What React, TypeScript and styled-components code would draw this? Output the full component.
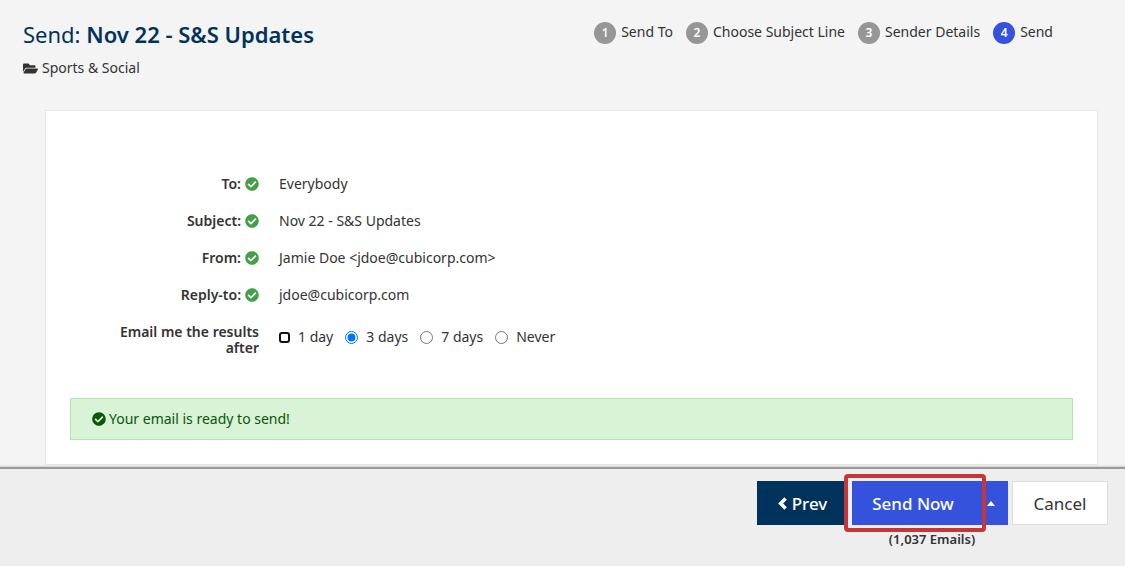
import React from "react";
import styled, { createGlobalStyle, css } from "styled-components";
import { FaCheckCircle, FaFolderOpen } from "react-icons/fa";

const GlobalStyle = createGlobalStyle`
  * { box-sizing: border-box; }
  body {
    margin: 0;
    background: #f4f4f4;
    color: #333;
    font: 14px/20px "Noto Sans", sans-serif;
  }
  button, input { font-family: inherit; }
`;

const Page = styled.div`
  display: flex;
  flex-direction: column;
  min-height: 100vh;
`;

const Header = styled.header`
  display: flex;
  justify-content: space-between;
  align-items: flex-start;
  padding: 18px 72px 0 23px;
`;

const Title = styled.h1`
  margin: 0;
  font-size: 22px;
  line-height: 32px;
  font-weight: 400;
  color: #00335b;
  strong { font-weight: 600; }
`;

const Folder = styled.p`
  display: flex;
  align-items: center;
  gap: 4px;
  margin: 8px 0 0;
`;

const Steps = styled.ol`
  display: flex;
  gap: 13px;
  margin: 4px 0 0;
  padding: 0;
  list-style: none;
`;

const Step = styled.li`
  display: flex;
  align-items: flex-start;
  gap: 5px;
  white-space: nowrap;
`;

const StepNumber = styled.span<{ $active: boolean }>`
  width: 22px;
  height: 22px;
  border-radius: 50%;
  background: ${(p) => (p.$active ? "#3452dc" : "#969696")};
  color: #fff;
  font-size: 12px;
  line-height: 22px;
  font-weight: 600;
  text-align: center;
`;

const Main = styled.main`
  flex: 1;
  padding: 32px 27px 0 45px;
`;

const Card = styled.section`
  padding: 63px 24px 24px;
  background: #fff;
  border: 1px solid #e8e8e8;
`;

const Summary = styled.div`
  display: grid;
  grid-template-columns: 189px 1fr;
  column-gap: 20px;
  row-gap: 17px;
`;

const Label = styled.div`
  display: flex;
  justify-content: flex-end;
  align-items: center;
  gap: 4px;
  font-weight: 600;
  text-align: right;
`;

const ResultsLabel = styled(Label)`
  padding: 2px 0 0 40px;
  line-height: 16px;
`;

const Radios = styled.div`
  display: flex;
  align-items: center;
  align-self: start;
  gap: 12px;
  height: 30px;
`;

const Choice = styled.label`
  display: flex;
  align-items: center;
  gap: 8px;
`;

const Radio = styled.input<{ $square: boolean }>`
  width: 13px;
  height: 13px;
  margin: 0;
  accent-color: #0075ff;
  ${(p) =>
    p.$square &&
    css`
      appearance: none;
      width: 11px;
      height: 11px;
      border: 2px solid #101010;
      border-radius: 3px;
      &:checked { background: #0075ff; }
    `}
`;

const Alert = styled.div`
  display: flex;
  align-items: center;
  gap: 3px;
  margin-top: 42px;
  padding: 10px 21px;
  border: 1px solid #b5e5b0;
  background: #d8f3d5;
  color: #0b560b;
`;

const Footer = styled.footer`
  position: sticky;
  bottom: 0;
  display: flex;
  justify-content: flex-end;
  align-items: flex-start;
  height: 99px;
  padding: 12px 17px 0;
  border-top: 2px solid #999;
  background: #eee;
  box-shadow: 0 -1px 2px rgba(0, 0, 0, 0.15);
`;

const Button = styled.button<{ $kind: "dark" | "blue" | "plain" }>`
  display: flex;
  align-items: center;
  justify-content: center;
  gap: 5px;
  height: 44px;
  padding: 0 20px;
  border: 0;
  font-size: 17px;
  white-space: nowrap;
  ${(p) =>
    p.$kind === "dark"
      ? css`background: #00335b; color: #fff; width: 91px; font-weight: 500;`
      : p.$kind === "blue"
        ? css`background: #3452dc; color: #fff; font-weight: 500;`
        : css`background: #fff; color: #333; border: 1px solid #ddd; width: 96px; margin-left: 4px;`}
`;

const SendGroup = styled.div`
  display: flex;
  flex-direction: column;
  align-items: center;
`;

const SplitButton = styled.div`
  display: flex;
  margin-left: 4px;
`;

const Highlight = styled.div`
  position: relative;
  display: flex;
  width: 130px;
  &::after {
    content: "";
    position: absolute;
    inset: -7px -4px -7px -8px;
    border: 4px solid #c63639;
    border-radius: 4px;
    box-shadow: inset 4px 0 0 #eee;
    pointer-events: none;
  }
  button { flex: 1; padding: 0 28px 0 20px; }
`;

const CaretButton = styled(Button)`
  width: 26px;
  padding: 0 8px 0 0;
`;

const Count = styled.strong`
  margin: 4px 0 0 8px;
  font-size: 13px;
  font-weight: 600;
`;

const steps = ["Send To", "Choose Subject Line", "Sender Details", "Send"];

const details = [
  ["To:", "Everybody"],
  ["Subject:", "Nov 22 - S&S Updates"],
  ["From:", "Jamie Doe <jdoe@cubicorp.com>"],
  ["Reply-to:", "jdoe@cubicorp.com"],
];

export default function App() {
  return (
    <Page>
      <GlobalStyle />
      <Header>
        <div>
          <Title>Send: <strong>Nov 22 - S&amp;S Updates</strong></Title>
          <Folder><FaFolderOpen size={15} />Sports &amp; Social</Folder>
        </div>
        <Steps>
          {steps.map((name, i) => (
            <Step key={name}>
              <StepNumber $active={i === 3}>{i + 1}</StepNumber>
              {name}
            </Step>
          ))}
        </Steps>
      </Header>
      <Main>
        <Card>
          <Summary>
            {details.map(([label, value]) => (
              <React.Fragment key={label}>
                <Label>{label}<FaCheckCircle size={14} color="#43a047" /></Label>
                <div>{value}</div>
              </React.Fragment>
            ))}
            <ResultsLabel id="results-label">Email me the results after</ResultsLabel>
            <Radios role="radiogroup" aria-labelledby="results-label">
              {["1 day", "3 days", "7 days", "Never"].map((name, i) => (
                <Choice key={name}>
                  <Radio
                    type="radio"
                    name="results"
                    $square={i === 0}
                    defaultChecked={name === "3 days"}
                  />
                  {name}
                </Choice>
              ))}
            </Radios>
          </Summary>
          <Alert role="status"><FaCheckCircle size={14} />Your email is ready to send!</Alert>
        </Card>
      </Main>
      <Footer>
        <Button $kind="dark" type="button">
          <svg width="9" height="13" viewBox="0 0 9 13" aria-hidden="true">
            <path d="M7.6 1.5L2.6 6.5l5 5" fill="none" stroke="currentColor" strokeWidth="3.4" />
          </svg>
          Prev
        </Button>
        <SendGroup>
          <SplitButton>
            <Highlight><Button $kind="blue" type="button">Send Now</Button></Highlight>
            <CaretButton $kind="blue" type="button" aria-label="More send options">
              <svg width="8" height="5" viewBox="0 0 8 5"><path d="M4 0l4 5H0z" fill="currentColor" /></svg>
            </CaretButton>
          </SplitButton>
          <Count>(1,037 Emails)</Count>
        </SendGroup>
        <Button $kind="plain" type="button">Cancel</Button>
      </Footer>
    </Page>
  );
}
